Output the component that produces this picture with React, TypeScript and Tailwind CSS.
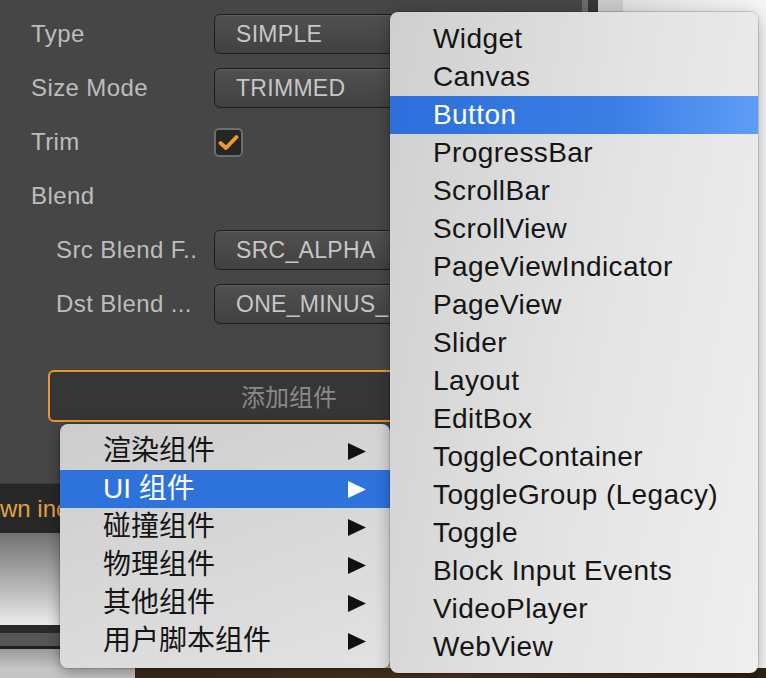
import { ReactNode } from 'react'

const uiItems = [
  'Widget',
  'Canvas',
  'Button',
  'ProgressBar',
  'ScrollBar',
  'ScrollView',
  'PageViewIndicator',
  'PageView',
  'Slider',
  'Layout',
  'EditBox',
  'ToggleContainer',
  'ToggleGroup (Legacy)',
  'Toggle',
  'Block Input Events',
  'VideoPlayer',
  'WebView',
]

const groups = ['渲染组件', 'UI 组件', '碰撞组件', '物理组件', '其他组件', '用户脚本组件']

function Row({ label, indent, children }: { label: string; indent?: boolean; children?: ReactNode }) {
  return (
    <div className="flex items-center h-[54px]">
      <span className={`w-[214px] shrink-0 text-[24px] tracking-[0.4px] text-[#bdbdbd] ${indent ? 'pl-[56px]' : 'pl-[31px]'}`}>
        {label}
      </span>
      {children}
    </div>
  )
}

function Select({ value }: { value: string }) {
  return (
    <div className="flex items-center w-[340px] h-[40px] pl-[21px] rounded-[6px] border border-[#1c1c1c] bg-gradient-to-b from-[#505050] to-[#414141] shadow-[inset_0_1px_0_rgba(255,255,255,0.08)] text-[23px] tracking-[0.3px] text-[#c6c6c6] whitespace-nowrap overflow-hidden">
      {value}
    </div>
  )
}

function Arrow({ white }: { white?: boolean }) {
  return (
    <svg width="18" height="17" viewBox="0 0 18 17">
      <polygon points="0,0 18,8.5 0,17" fill={white ? '#ffffff' : '#111111'} />
    </svg>
  )
}

export default function App() {
  return (
    <div className="relative flex flex-col w-[766px] h-[678px] overflow-hidden bg-[#464646] font-['Liberation_Sans','Noto_Sans_CJK_SC',Arial,sans-serif]">
      <div className="flex h-[668px]">
        <div className="flex flex-col w-[598px]">
          <div className="flex h-[483px]">
            <div className="w-[582px] bg-[#464646] pt-[7px] flex flex-col">
              <Row label="Type">
                <Select value="SIMPLE" />
              </Row>
              <Row label="Size Mode">
                <Select value="TRIMMED" />
              </Row>
              <Row label="Trim">
                <div className="flex items-center justify-center w-[29px] h-[29px] rounded-[5px] border-2 border-[#6e6e6e] bg-[#262626]">
                  <svg width="21" height="17" viewBox="0 0 21 17">
                    <path d="M2.5 9 L8 14 L18.5 3" fill="none" stroke="#f39a2c" strokeWidth="3.8" strokeLinecap="round" strokeLinejoin="round" />
                  </svg>
                </div>
              </Row>
              <Row label="Blend" />
              <Row label="Src Blend F.." indent>
                <Select value="SRC_ALPHA" />
              </Row>
              <Row label="Dst Blend ..." indent>
                <Select value="ONE_MINUS_S" />
              </Row>
              <button className="mt-[39px] ml-[48px] w-[482px] h-[52px] rounded-[6px] border-2 border-[#f0952e] bg-[#363636] text-[24px] text-[#8a8a8a] font-['Noto_Sans_CJK_SC',sans-serif]">
                添加组件
              </button>
            </div>
            <div className="w-[6px] bg-[#6b6b6b]" />
            <div className="w-[10px] bg-[#363636]" />
          </div>
          <div className="h-[50px] bg-[#272727] border-t border-[#3a3a3a] flex items-center text-[24px] text-[#e3a23e] whitespace-nowrap">
            wn inc
          </div>
          <div className="flex flex-col flex-1">
            <div className="h-[92px] bg-gradient-to-b from-[#727272] to-[#ececec]" />
            <div className="h-[8px] bg-[#2a2a2a]" />
            <div className="h-[13px] bg-[#565656]" />
            <div className="h-[3px] bg-[#1e1e1e]" />
            <div className="flex-1 bg-gradient-to-b from-[#9a9a9a] to-[#c4c4c4]" />
          </div>
        </div>
        <div className="w-[25px] bg-[#c9c9c9]" />
        <div className="flex-1 bg-gradient-to-r from-[#dedede] to-[#f6f6f6]" />
      </div>
      <div className="flex h-[10px]">
        <div className="w-[135px] bg-[#c6c6c6]" />
        <div className="flex-1 bg-gradient-to-r from-[#3b2a1b] via-[#4a3520] to-[#2e2116]" />
      </div>

      <div className="absolute left-[60px] top-[424px] w-[330px] py-[8px] rounded-[8px] bg-[linear-gradient(160deg,#cdcdcd,#e2e2e2)] shadow-[0_4px_14px_rgba(0,0,0,0.35),0_0_0_1px_rgba(0,0,0,0.12)]">
        {groups.map((g, i) => (
          <div
            key={g}
            className={`flex items-center justify-between h-[38px] pl-[43px] pr-[24px] text-[28px] leading-[38px] ${i === 1 ? 'bg-[#2e72dc] text-white' : 'text-[#151515]'}`}
          >
            <span>{g}</span>
            <Arrow white={i === 1} />
          </div>
        ))}
      </div>

      <div className="absolute left-[390px] top-[12px] w-[368px] pt-[8px] pb-[7px] rounded-[8px] bg-[linear-gradient(100deg,#cfcfcf,#e4e4e4_55%,#efefef)] shadow-[0_4px_16px_rgba(0,0,0,0.3),0_0_0_1px_rgba(0,0,0,0.14)]">
        {uiItems.map((item, i) => (
          <div
            key={item}
            className={`h-[38px] pl-[43px] text-[28px] leading-[38px] tracking-[0.4px] whitespace-nowrap ${i === 2 ? 'bg-[linear-gradient(to_right,#2d6fdb,#3a7ee4_60%,#5e9cf7)] text-white' : 'text-[#151515]'}`}
          >
            {item}
          </div>
        ))}
      </div>
    </div>
  )
}
